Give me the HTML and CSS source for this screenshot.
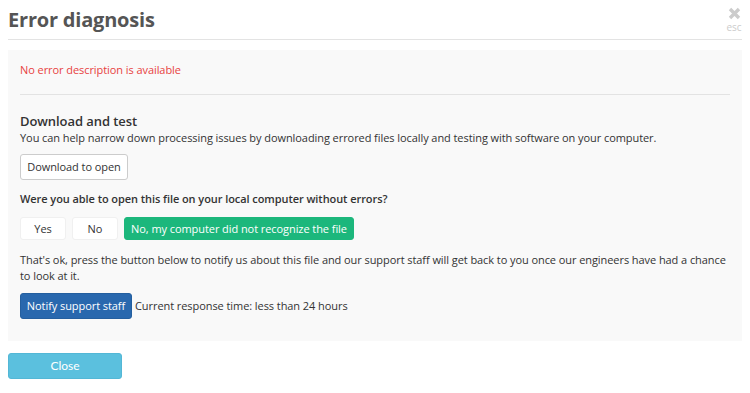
FILE: index.html
```html
<!DOCTYPE html>
<html lang="en">
<head>
<meta charset="utf-8">
<title>Error diagnosis</title>
<link rel="stylesheet" href="styles.css">
</head>
<body>
<div class="modal">
  <header class="modal-header">
    <h1 class="modal-title">Error diagnosis</h1>
    <div class="close-x">
      <svg class="x-icon" width="13" height="13" viewBox="0 0 13 13"><path d="M2 2 L11 11 M11 2 L2 11" stroke="#cccccc" stroke-width="3.4" stroke-linecap="butt"/></svg>
      <span class="esc">esc</span>
    </div>
  </header>
  <section class="panel">
    <p class="error-text">No error description is available</p>
    <div class="divider"></div>
    <h4 class="section-title">Download and test</h4>
    <p class="desc">You can help narrow down processing issues by downloading errored files locally and testing with software on your computer.</p>
    <button class="btn btn-default btn-download">Download to open</button>
    <p class="question">Were you able to open this file on your local computer without errors?</p>
    <div class="choice-row">
      <button class="btn btn-plain btn-yes">Yes</button>
      <button class="btn btn-plain btn-no">No</button>
      <button class="btn btn-success">No, my computer did not recognize the file</button>
    </div>
    <p class="notify-text">That's ok, press the button below to notify us about this file and our support staff will get back to you once our engineers have had a chance to look at it.</p>
    <div class="notify-row">
      <button class="btn btn-primary">Notify support staff</button>
      <span class="response">Current response time: less than 24 hours</span>
    </div>
  </section>
  <footer class="modal-footer">
    <button class="btn btn-info">Close</button>
  </footer>
</div>
</body>
</html>
```

FILE: styles.css
```css
* { box-sizing: border-box; }
html, body { margin: 0; padding: 0; background: #ffffff; }
body {
  font-family: "Open Sans", "Noto Sans", sans-serif;
  font-size: 11px;
  letter-spacing: -0.07px;
  color: #333333;
}
.modal { padding: 0 8px; width: 750px; }
.modal-header {
  display: flex;
  justify-content: space-between;
  align-items: flex-start;
  height: 40px;
  border-bottom: 1px solid #e3e3e3;
}
.modal-title {
  margin: 0;
  padding-top: 6px;
  font-size: 20px;
  line-height: 28px;
  font-weight: 700;
  color: #555555;
  letter-spacing: -0.2px;
}
.close-x {
  display: flex;
  flex-direction: column;
  align-items: center;
  width: 20px;
  margin-right: -2px;
  padding-top: 7px;
}
.x-icon { display: block; }
.esc {
  font-size: 10px;
  line-height: 12px;
  color: #cccccc;
  margin-top: 1px;
}
.panel {
  margin-top: 10px;
  background: #f9f9f9;
  padding: 12px 12px 22px 12px;
}
p { margin: 0; }
.error-text { color: #e8423f; line-height: 16px; }
.divider { height: 1px; background: #e3e3e3; margin: 16px 0 0 0; }
.section-title {
  margin: 17px 0 0 0;
  font-size: 13px;
  line-height: 18px;
  font-weight: 600;
  color: #333333;
}
.desc { line-height: 16px; }
.btn {
  font-family: inherit;
  font-size: 11px;
  letter-spacing: inherit;
  line-height: 16px;
  border-radius: 3px;
  cursor: pointer;
  display: inline-block;
  white-space: nowrap;
  text-align: center;
}
.btn-default {
  background: #ffffff;
  border: 1px solid #cccccc;
  color: #333333;
  height: 26px;
  padding: 0;
}
.btn-download { margin-top: 8px; width: 108px; }
.question { margin-top: 11px; line-height: 16px; font-weight: 600; }
.choice-row { display: flex; gap: 6px; margin-top: 10px; }
.btn-plain {
  background: #ffffff;
  border: 1px solid #f0f0f0;
  color: #333333;
  height: 23px;
  width: 46px;
  padding: 0;
}
.btn-success {
  background: #1cb77c;
  border: 1px solid #1cb77c;
  color: #ffffff;
  height: 23px;
  width: 230px;
  padding: 0;
}
.notify-text { margin-top: 12px; line-height: 16px; }
.notify-row { display: flex; align-items: center; gap: 3px; margin-top: 9px; }
.btn-primary {
  background: #2968ae;
  border: 1px solid #245f9f;
  color: #ffffff;
  height: 26px;
  width: 112px;
  padding: 0;
}
.response { line-height: 16px; }
.modal-footer { padding-top: 12px; }
.btn-info {
  background: #5bc0de;
  border: 1px solid #53b7d6;
  color: #ffffff;
  height: 26px;
  width: 114px;
  padding: 0;
  font-family: "Lato", sans-serif;
  font-size: 12px;
  letter-spacing: 0;
}
```
